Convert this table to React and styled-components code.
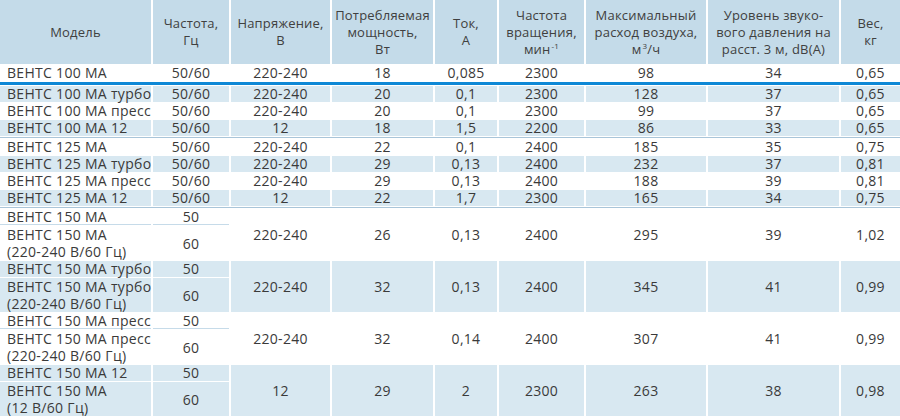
import React from 'react';
import styled, { createGlobalStyle } from 'styled-components';

const GlobalStyle = createGlobalStyle`
  html, body {
    margin: 0;
    padding: 0;
    background: #fff;
    overflow: hidden;
  }
  body {
    font-family: "Open Sans", "Noto Sans", sans-serif;
    color: #3a3a3a;
  }
`;

const Table = styled.table`
  table-layout: fixed;
  border-collapse: separate;
  border-spacing: 2px 1px;
  width: 904px;
  margin: -1px -2px 0;
  font-size: 14px;
  letter-spacing: 0.3px;
`;

const HeadCell = styled.th`
  height: 64px;
  padding: 0;
  background: #c4dbe9;
  font-size: 13px;
  font-weight: 400;
  line-height: 17px;
  text-align: center;
  vertical-align: middle;
  color: #404040;
  letter-spacing: 0.2px;
  white-space: nowrap;
`;

const Sup = styled.sup`
  font-size: 8px;
  line-height: 0;
  vertical-align: 5px;
  margin-left: 1px;
`;

const Row = styled.tr`
  & > td {
    background: ${p => (p.$shade ? '#d8e8f1' : '#fff')};
  }
`;

const Cell = styled.td`
  height: ${p => (p.$tall ? '34px' : '16px')};
  padding: 0 0 0 ${p => (p.$left ? '7px' : '0')};
  line-height: ${p => (p.$tall ? '17px' : '16px')};
  text-align: ${p => (p.$left ? 'left' : 'center')};
  vertical-align: middle;
  white-space: nowrap;
  color: #3a3a3a;
  box-shadow: ${p => (p.$rule ? 'inset 0 -1px 0 #c6dbe9' : 'none')};
`;

const Rule = styled.tr`
  & > td {
    height: ${p => p.$size}px;
    padding: 0;
    background: ${p => p.$color};
  }
`;

const widths = [151, 76, 99, 101, 62, 85, 120, 131, 59];

const headers = [
  ['Модель'],
  ['Частота,', 'Гц'],
  ['Напряжение,', 'В'],
  ['Потребляемая', 'мощность,', 'Вт'],
  ['Ток,', 'А'],
  ['Частота', 'вращения,', <>мин<Sup>-1</Sup></>],
  ['Максимальный', 'расход воздуха,', <>м<Sup>3</Sup>/ч</>],
  ['Уровень звуко-', 'вого давления на', 'расст. 3 м, dB(A)'],
  ['Вес,', 'кг'],
];

const firstRow = ['ВЕНТС 100 МА', '50/60', '220-240', '18', '0,085', '2300', '98', '34', '0,65'];

const groups = [
  [
    ['ВЕНТС 100 МА турбо', '50/60', '220-240', '20', '0,1', '2300', '128', '37', '0,65'],
    ['ВЕНТС 100 МА пресс', '50/60', '220-240', '20', '0,1', '2300', '99', '37', '0,65'],
    ['ВЕНТС 100 МА 12', '50/60', '12', '18', '1,5', '2200', '86', '33', '0,65'],
  ],
  [
    ['ВЕНТС 125 МА', '50/60', '220-240', '22', '0,1', '2400', '185', '35', '0,75'],
    ['ВЕНТС 125 МА турбо', '50/60', '220-240', '29', '0,13', '2400', '232', '37', '0,81'],
    ['ВЕНТС 125 МА пресс', '50/60', '220-240', '29', '0,13', '2400', '188', '39', '0,81'],
    ['ВЕНТС 125 МА 12', '50/60', '12', '22', '1,7', '2300', '165', '34', '0,75'],
  ],
];

const pairs = [
  {
    top: 'ВЕНТС 150 МА',
    bottom: ['ВЕНТС 150 МА', '(220-240 В/60 Гц)'],
    values: ['220-240', '26', '0,13', '2400', '295', '39', '1,02'],
  },
  {
    top: 'ВЕНТС 150 МА турбо',
    bottom: ['ВЕНТС 150 МА турбо', '(220-240 В/60 Гц)'],
    values: ['220-240', '32', '0,13', '2400', '345', '41', '0,99'],
  },
  {
    top: 'ВЕНТС 150 МА пресс',
    bottom: ['ВЕНТС 150 МА пресс', '(220-240 В/60 Гц)'],
    values: ['220-240', '32', '0,14', '2400', '307', '41', '0,99'],
  },
  {
    top: 'ВЕНТС 150 МА 12',
    bottom: ['ВЕНТС 150 МА', '(12 В/60 Гц)'],
    values: ['12', '29', '2', '2300', '263', '38', '0,98'],
  },
];

function DataRow({ cells, shade }) {
  return (
    <Row $shade={shade}>
      {cells.map((c, i) => (
        <Cell key={i} $left={i === 0}>{c}</Cell>
      ))}
    </Row>
  );
}

function PairGroup({ top, bottom, values, shade }) {
  return (
    <>
      <Row $shade={shade}>
        <Cell $left $rule={!shade}>{top}</Cell>
        <Cell $rule={!shade}>50</Cell>
        {values.map((v, i) => (
          <Cell key={i} rowSpan={2}>{v}</Cell>
        ))}
      </Row>
      <Row $shade={shade}>
        <Cell $left $tall>
          {bottom[0]}
          <br />
          {bottom[1]}
        </Cell>
        <Cell $tall>60</Cell>
      </Row>
    </>
  );
}

export default function App() {
  return (
    <>
      <GlobalStyle />
      <Table>
        <colgroup>
          {widths.map((w, i) => (
            <col key={i} style={{ width: w }} />
          ))}
        </colgroup>
        <thead>
          <tr>
            {headers.map((lines, i) => (
              <HeadCell key={i}>
                {lines.map((l, j) => (
                  <React.Fragment key={j}>
                    {j > 0 && <br />}
                    {l}
                  </React.Fragment>
                ))}
              </HeadCell>
            ))}
          </tr>
        </thead>
        <tbody>
          <DataRow cells={firstRow} shade={false} />
          <Rule $color="#0e88d6" $size={3}><td colSpan={9} /></Rule>
          {groups.map((g, gi) => (
            <React.Fragment key={gi}>
              {g.map((r, ri) => (
                <DataRow
                  key={ri}
                  cells={r}
                  shade={gi === 0 ? ri % 2 === 0 : ri % 2 === 1}
                />
              ))}
              <Rule $color="#a9c5d9" $size={1}><td colSpan={9} /></Rule>
            </React.Fragment>
          ))}
          {pairs.map((p, i) => (
            <PairGroup key={i} {...p} shade={i % 2 === 1} />
          ))}
        </tbody>
      </Table>
    </>
  );
}
